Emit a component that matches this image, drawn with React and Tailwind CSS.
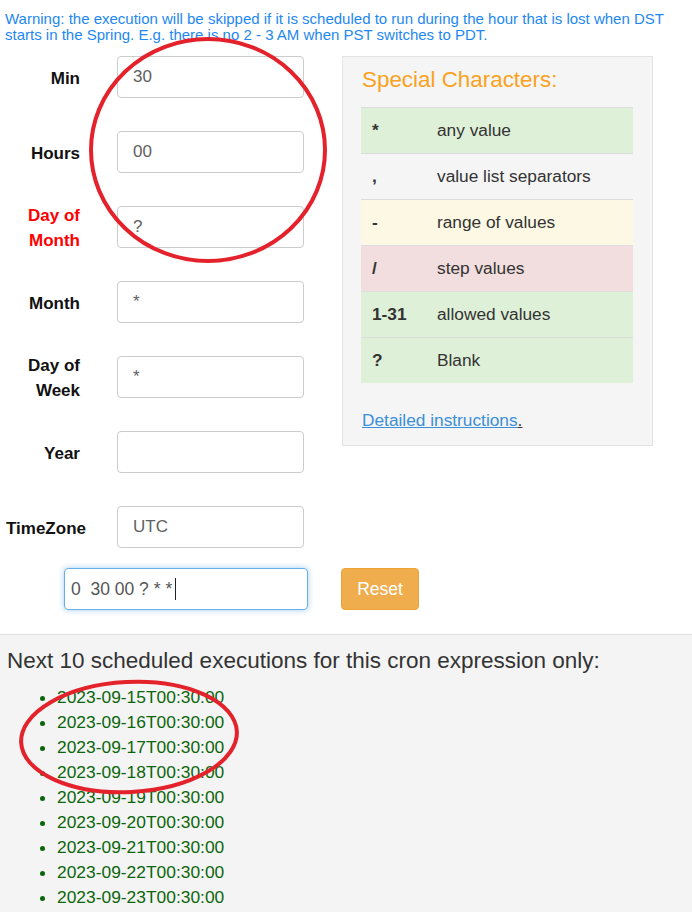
import React from "react";

const rows = [
  { label: "Min", value: "30", red: false },
  { label: "Hours", value: "00", red: false },
  { label: "Day of Month", value: "?", red: true },
  { label: "Month", value: "*", red: false },
  { label: "Day of Week", value: "*", red: false },
  { label: "Year", value: "", red: false },
  { label: "TimeZone", value: "UTC", red: false },
];

const specials = [
  { k: "*", v: "any value", bg: "bg-[#dff0d8]" },
  { k: ",", v: "value list separators", bg: "" },
  { k: "-", v: "range of values", bg: "bg-[#fcf8e3]" },
  { k: "/", v: "step values", bg: "bg-[#f2dede]" },
  { k: "1-31", v: "allowed values", bg: "bg-[#dff0d8]" },
  { k: "?", v: "Blank", bg: "bg-[#dff0d8]" },
];

const dates = [15, 16, 17, 18, 19, 20, 21, 22, 23].map(
  (d) => `2023-09-${d}T00:30:00`
);

export default function App() {
  return (
    <div className="relative w-[692px] h-[912px] overflow-hidden bg-white font-['Liberation_Sans',Arial,sans-serif]">
      <p className="px-[5px] pt-[11px] text-[15px] leading-[16px] text-[#1e88f0] whitespace-nowrap">
        Warning: the execution will be skipped if it is scheduled to run during the hour that is lost when DST
        <br />
        starts in the Spring. E.g. there is no 2 - 3 AM when PST switches to PDT.
      </p>

      <div className="flex mt-[13px]">
        <div className="flex flex-col gap-[33px]">
          {rows.map((r) => (
            <div key={r.label} className="flex items-center h-[42px]">
              <div
                className={`ml-[6px] w-[74px] text-right font-bold text-[17px] leading-[25px] pt-[2px] ${
                  r.red ? "text-[#ff0000]" : "text-[#111]"
                }`}
              >
                {r.label}
              </div>
              <div className="ml-[37px] w-[187px] h-[42px] border border-[#ccc] rounded-[4px] flex items-center pl-[15px] text-[17px] text-[#606060]">
                {r.value}
              </div>
            </div>
          ))}
        </div>

        <div className="ml-[38px] w-[311px] h-[390px] bg-[#f5f5f5] border border-[#e3e3e3] px-[18px] pt-[10px]">
          <div className="text-[22.4px] leading-[26px] text-[#f9a21e] pl-[1px]">Special Characters:</div>
          <div className="mt-[14px] w-[272px]">
            {specials.map((s, i) => (
              <div
                key={i}
                className={`flex items-center h-[46px] border-t border-[#ddd] text-[17.3px] text-[#333] ${s.bg}`}
              >
                <div className="w-[76px] pl-[11px] font-bold">{s.k}</div>
                <div>{s.v}</div>
              </div>
            ))}
          </div>
          <div className="mt-[25px] pl-[1px] text-[17.3px] leading-[24px]">
            <a className="text-[#3a8fd9] underline">Detailed instructions</a>
            <span className="underline text-[#333]">.</span>
          </div>
        </div>
      </div>

      <div className="flex items-center mt-[20px]">
        <div className="ml-[64px] w-[244px] h-[42px] border border-[#66afe9] rounded-[4px] shadow-[0_0_6px_rgba(102,175,233,0.6)] flex items-center pl-[6px] text-[17.5px] text-[#555]">
          <span className="whitespace-pre">0  30 00 ? * *</span>
          <span className="ml-[3px] w-[1px] h-[22px] bg-[#222]"></span>
        </div>
        <div className="ml-[33px] w-[78px] h-[42px] bg-[#f0ad4e] border border-[#eea236] rounded-[4px] text-white text-[17.5px] flex items-center justify-center">
          Reset
        </div>
      </div>

      <div className="mt-[24px] border-t border-[#ddd] bg-[#f4f4f4] h-[300px] pt-[12px]">
        <div className="pl-[7px] text-[22.5px] leading-[28px] text-[#333] whitespace-nowrap">
          Next 10 scheduled executions for this cron expression only:
        </div>
        <ul className="mt-[10px] list-disc pl-[57px] text-[17.4px] leading-[25px] text-[#0b660b]">
          {dates.map((d) => (
            <li key={d}>{d}</li>
          ))}
        </ul>
      </div>

      <svg className="absolute top-0 left-0 pointer-events-none" width="692" height="912">
        <ellipse cx="208" cy="150" rx="117" ry="111" fill="none" stroke="#e4222b" strokeWidth="4" />
        <ellipse
          cx="129"
          cy="737"
          rx="108"
          ry="55"
          fill="none"
          stroke="#e4222b"
          strokeWidth="4"
          transform="rotate(-3 129 737)"
        />
      </svg>
    </div>
  );
}
